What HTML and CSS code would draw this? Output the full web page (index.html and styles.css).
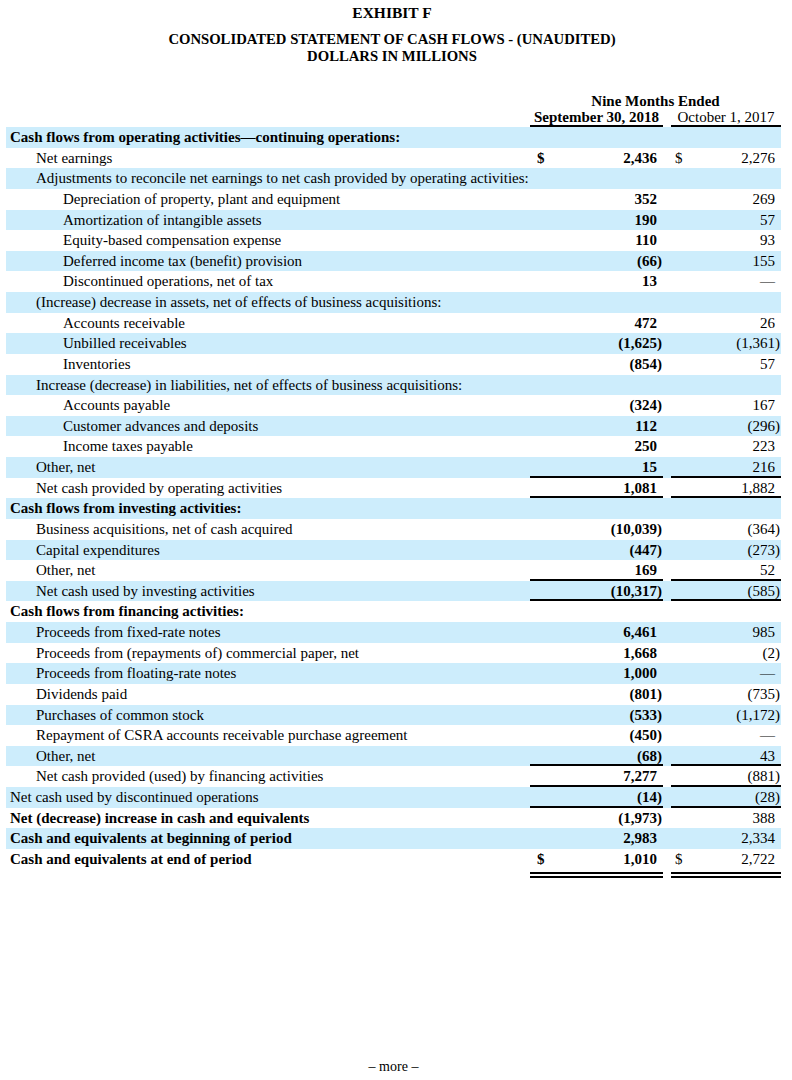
FILE: index.html
```html
<!DOCTYPE html>
<html lang="en">
<head>
<meta charset="utf-8">
<title>Exhibit F - Consolidated Statement of Cash Flows</title>
<link rel="stylesheet" href="styles.css">
</head>
<body>
<div class="page">
  <header class="titles">
    <div class="exhibit">EXHIBIT F</div>
    <div class="title">CONSOLIDATED STATEMENT OF CASH FLOWS - (UNAUDITED)</div>
    <div class="title">DOLLARS IN MILLIONS</div>
  </header>

  <div class="period">
    <div></div>
    <div class="period-name">Nine Months Ended</div>
  </div>
  <div class="row colhead">
    <div class="lbl"></div>
    <div class="hd v1 b">September 30, 2018</div>
    <div class="gap"></div>
    <div class="hd v2">October 1, 2017</div>
  </div>

  <div class="stmt">
    <div class="row"><div class="lbl l0 b">Cash flows from operating activities—continuing operations:</div><div class="v1"></div><div class="gap"></div><div class="v2"></div></div>
    <div class="row"><div class="lbl l1">Net earnings</div><div class="v1 b"><span>$</span><span>2,436</span></div><div class="gap"></div><div class="v2"><span>$</span><span>2,276</span></div></div>
    <div class="row"><div class="lbl l1">Adjustments to reconcile net earnings to net cash provided by operating activities:</div><div class="v1"></div><div class="gap"></div><div class="v2"></div></div>
    <div class="row"><div class="lbl l2">Depreciation of property, plant and equipment</div><div class="v1 b"><span>352</span></div><div class="gap"></div><div class="v2"><span>269</span></div></div>
    <div class="row"><div class="lbl l2">Amortization of intangible assets</div><div class="v1 b"><span>190</span></div><div class="gap"></div><div class="v2"><span>57</span></div></div>
    <div class="row"><div class="lbl l2">Equity-based compensation expense</div><div class="v1 b"><span>110</span></div><div class="gap"></div><div class="v2"><span>93</span></div></div>
    <div class="row"><div class="lbl l2">Deferred income tax (benefit) provision</div><div class="v1 b neg"><span>(66)</span></div><div class="gap"></div><div class="v2"><span>155</span></div></div>
    <div class="row"><div class="lbl l2">Discontinued operations, net of tax</div><div class="v1 b"><span>13</span></div><div class="gap"></div><div class="v2"><span>—</span></div></div>
    <div class="row"><div class="lbl l1">(Increase) decrease in assets, net of effects of business acquisitions:</div><div class="v1"></div><div class="gap"></div><div class="v2"></div></div>
    <div class="row"><div class="lbl l2">Accounts receivable</div><div class="v1 b"><span>472</span></div><div class="gap"></div><div class="v2"><span>26</span></div></div>
    <div class="row"><div class="lbl l2">Unbilled receivables</div><div class="v1 b neg"><span>(1,625)</span></div><div class="gap"></div><div class="v2 neg"><span>(1,361)</span></div></div>
    <div class="row"><div class="lbl l2">Inventories</div><div class="v1 b neg"><span>(854)</span></div><div class="gap"></div><div class="v2"><span>57</span></div></div>
    <div class="row"><div class="lbl l1">Increase (decrease) in liabilities, net of effects of business acquisitions:</div><div class="v1"></div><div class="gap"></div><div class="v2"></div></div>
    <div class="row"><div class="lbl l2">Accounts payable</div><div class="v1 b neg"><span>(324)</span></div><div class="gap"></div><div class="v2"><span>167</span></div></div>
    <div class="row"><div class="lbl l2">Customer advances and deposits</div><div class="v1 b"><span>112</span></div><div class="gap"></div><div class="v2 neg"><span>(296)</span></div></div>
    <div class="row"><div class="lbl l2">Income taxes payable</div><div class="v1 b"><span>250</span></div><div class="gap"></div><div class="v2"><span>223</span></div></div>
    <div class="row"><div class="lbl l1">Other, net</div><div class="v1 b ul"><span>15</span></div><div class="gap"></div><div class="v2 ul"><span>216</span></div></div>
    <div class="row"><div class="lbl l1">Net cash provided by operating activities</div><div class="v1 b ul"><span>1,081</span></div><div class="gap"></div><div class="v2 ul"><span>1,882</span></div></div>
    <div class="row"><div class="lbl l0 b">Cash flows from investing activities:</div><div class="v1"></div><div class="gap"></div><div class="v2"></div></div>
    <div class="row"><div class="lbl l1">Business acquisitions, net of cash acquired</div><div class="v1 b neg"><span>(10,039)</span></div><div class="gap"></div><div class="v2 neg"><span>(364)</span></div></div>
    <div class="row"><div class="lbl l1">Capital expenditures</div><div class="v1 b neg"><span>(447)</span></div><div class="gap"></div><div class="v2 neg"><span>(273)</span></div></div>
    <div class="row"><div class="lbl l1">Other, net</div><div class="v1 b ul"><span>169</span></div><div class="gap"></div><div class="v2 ul"><span>52</span></div></div>
    <div class="row"><div class="lbl l1">Net cash used by investing activities</div><div class="v1 b neg ul"><span>(10,317)</span></div><div class="gap"></div><div class="v2 neg ul"><span>(585)</span></div></div>
    <div class="row"><div class="lbl l0 b">Cash flows from financing activities:</div><div class="v1"></div><div class="gap"></div><div class="v2"></div></div>
    <div class="row"><div class="lbl l1">Proceeds from fixed-rate notes</div><div class="v1 b"><span>6,461</span></div><div class="gap"></div><div class="v2"><span>985</span></div></div>
    <div class="row"><div class="lbl l1">Proceeds from (repayments of) commercial paper, net</div><div class="v1 b"><span>1,668</span></div><div class="gap"></div><div class="v2 neg"><span>(2)</span></div></div>
    <div class="row"><div class="lbl l1">Proceeds from floating-rate notes</div><div class="v1 b"><span>1,000</span></div><div class="gap"></div><div class="v2"><span>—</span></div></div>
    <div class="row"><div class="lbl l1">Dividends paid</div><div class="v1 b neg"><span>(801)</span></div><div class="gap"></div><div class="v2 neg"><span>(735)</span></div></div>
    <div class="row"><div class="lbl l1">Purchases of common stock</div><div class="v1 b neg"><span>(533)</span></div><div class="gap"></div><div class="v2 neg"><span>(1,172)</span></div></div>
    <div class="row"><div class="lbl l1">Repayment of CSRA accounts receivable purchase agreement</div><div class="v1 b neg"><span>(450)</span></div><div class="gap"></div><div class="v2"><span>—</span></div></div>
    <div class="row"><div class="lbl l1">Other, net</div><div class="v1 b neg ul"><span>(68)</span></div><div class="gap"></div><div class="v2 ul"><span>43</span></div></div>
    <div class="row"><div class="lbl l1">Net cash provided (used) by financing activities</div><div class="v1 b ul"><span>7,277</span></div><div class="gap"></div><div class="v2 neg ul"><span>(881)</span></div></div>
    <div class="row"><div class="lbl l0">Net cash used by discontinued operations</div><div class="v1 b neg ul"><span>(14)</span></div><div class="gap"></div><div class="v2 neg ul"><span>(28)</span></div></div>
    <div class="row"><div class="lbl l0 b">Net (decrease) increase in cash and equivalents</div><div class="v1 b neg"><span>(1,973)</span></div><div class="gap"></div><div class="v2"><span>388</span></div></div>
    <div class="row"><div class="lbl l0 b">Cash and equivalents at beginning of period</div><div class="v1 b"><span>2,983</span></div><div class="gap"></div><div class="v2"><span>2,334</span></div></div>
    <div class="row total"><div class="lbl l0 b">Cash and equivalents at end of period</div><div class="v1 b dbl"><span>$</span><span>1,010</span></div><div class="gap"></div><div class="v2 dbl"><span>$</span><span>2,722</span></div></div>
  </div>

  <footer class="more">– more –</footer>
</div>
</body>
</html>
```

FILE: styles.css
```css
html, body {
  margin: 0;
  padding: 0;
  background: #ffffff;
}

body {
  font-family: "Liberation Serif", "Times New Roman", serif;
  font-size: 15px;
  color: #000000;
}

.page {
  width: 775px;
  padding: 4px 0 0 6px;
}

.titles {
  text-align: center;
  font-weight: bold;
  font-size: 14.7px;
  padding-right: 3px;
}

.exhibit {
  font-size: 15.5px;
  line-height: 18px;
  margin-bottom: 9px;
}

.title {
  line-height: 17px;
}

.period {
  display: grid;
  grid-template-columns: 524px 251px;
  margin-top: 28px;
  line-height: 17px;
}

.period-name {
  text-align: center;
  font-weight: bold;
}

.row {
  display: grid;
  grid-template-columns: 524px 133px 8px 110px;
  height: 20.63px;
  line-height: 20.63px;
  white-space: nowrap;
}

.colhead {
  height: 17px;
  line-height: 15px;
}

.colhead .hd {
  text-align: center;
  box-shadow: inset 0 -2px 0 #000;
  padding: 0;
  display: block;
}

.stmt .row:nth-child(odd) {
  background: #cdedfc;
}

.l0 { padding-left: 4px; }
.l1 { padding-left: 30px; }
.l2 { padding-left: 57px; }

.b { font-weight: bold; }

.v1, .v2 {
  display: flex;
  justify-content: space-between;
  padding-right: 6px;
}

.v1 { padding-left: 7px; }
.v2 { padding-left: 4px; }

.v1 > span:only-child,
.v2 > span:only-child {
  margin-left: auto;
}

.v1.neg, .v2.neg { padding-right: 1px; }

.ul { box-shadow: inset 0 -2px 0 #000; }

.total { height: 29px; }

.dbl {
  height: 29px;
  box-shadow: inset 0 -2px 0 #000, inset 0 -4px 0 #fff, inset 0 -6px 0 #000;
}

.more {
  text-align: center;
  margin-top: 181px;
  line-height: 16px;
  font-size: 14px;
}
```
